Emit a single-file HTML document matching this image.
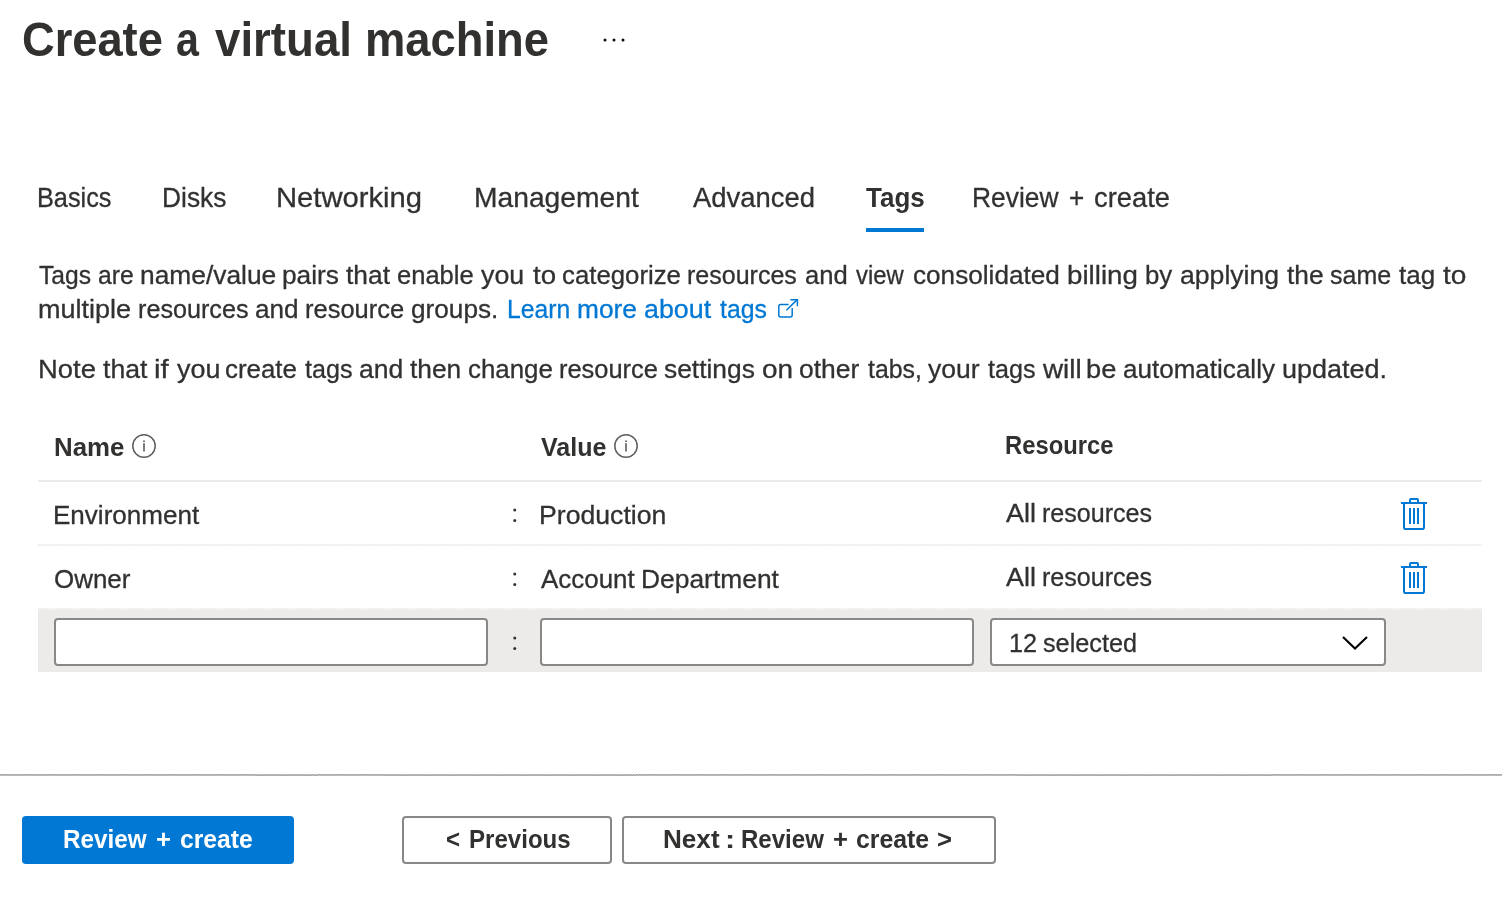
<!DOCTYPE html>
<html lang="en">
<head>
<meta charset="utf-8">
<title>Create a virtual machine - Microsoft Azure</title>
<style>
  html, body { margin: 0; padding: 0; }
  body {
    width: 1502px; height: 902px; overflow: hidden; position: relative;
    background: #ffffff; color: #323130;
    font-family: "Liberation Sans", sans-serif;
  }
  .t { position: absolute; white-space: pre; line-height: 1; font-family: "Liberation Sans", sans-serif; transform-origin: 0 50%; }
  .t.r { -webkit-text-stroke: 0.3px currentColor; }
  .abs { position: absolute; }
  /* active tab underline */
  .tab-underline { left: 866px; top: 228px; width: 58px; height: 4px; background: #0078d4; }
  /* table lines */
  .hdr-line { left: 38px; top: 480px; width: 1444px; height: 2px; background: #edebe9; }
  .row-line { left: 38px; width: 1444px; height: 2px;
    background: repeating-linear-gradient(90deg, #efeeed 0, #efeeed 2px, #f9f8f8 2px, #f9f8f8 3px); }
  .new-row { left: 38px; top: 608px; width: 1444px; height: 64px; background: #edebe9; }
  .new-row-dots { left: 38px; top: 608px; width: 1444px; height: 2px;
    background: repeating-linear-gradient(90deg, #edebe9 0, #edebe9 1.5px, #f6f5f4 1.5px, #f6f5f4 3px); }
  .field { box-sizing: border-box; top: 618px; height: 48px; background: #ffffff;
    border: 2px solid #8a8886; border-radius: 4px; }
  /* footer */
  .footer-line { left: 0; top: 774px; width: 1502px; height: 2px;
    background:
      repeating-linear-gradient(90deg, #a4a4a4 0, #a4a4a4 1.5px, #c4c4c4 1.5px, #c4c4c4 3px) 0 0 / 100% 1px no-repeat,
      repeating-linear-gradient(90deg, #c4c4c4 0, #c4c4c4 1.5px, #a4a4a4 1.5px, #a4a4a4 3px) 0 1px / 100% 1px no-repeat; }
  .btn { box-sizing: border-box; top: 816px; height: 48px; border-radius: 4px; }
  .btn-primary { left: 22px; width: 272px; background: #0078d4; }
  .btn-default { background: #ffffff; border: 2px solid #8a8886; }
  svg { position: absolute; overflow: visible; }
</style>
</head>
<body>

<!-- header "..." more button -->
<svg class="abs" style="left:0;top:0" width="1502" height="902" viewBox="0 0 1502 902">
  <g fill="#0a0a0a">
    <circle cx="605" cy="40" r="1.5"/><circle cx="614" cy="40" r="1.5"/><circle cx="623" cy="40" r="1.5"/>
  </g>
</svg>

<div class="abs tab-underline"></div>

<!-- table -->
<div class="abs hdr-line"></div>
<div class="abs row-line" style="top:544px"></div>
<div class="abs new-row"></div>
<div class="abs new-row-dots"></div>
<div class="abs field" style="left:54px;width:434px"></div>
<div class="abs field" style="left:540px;width:434px"></div>
<div class="abs field" style="left:990px;width:396px"></div>

<!-- footer -->
<div class="abs footer-line"></div>
<div class="abs btn btn-primary"></div>
<div class="abs btn btn-default" style="left:402px;width:210px"></div>
<div class="abs btn btn-default" style="left:622px;width:374px"></div>

<!-- icons -->
<svg class="abs" style="left:0;top:0" width="1502" height="902" viewBox="0 0 1502 902" fill="none">
  <!-- external link -->
  <g stroke="#0078d4" stroke-width="1.5" stroke-linecap="butt" stroke-linejoin="miter">
    <path d="M788.6 304.5 H780.8 Q778.8 304.5 778.8 306.5 V315 Q778.8 317 780.8 317 H790.2 Q792.2 317 792.2 315 V308"/>
    <path d="M786.4 310.3 L797.2 299.6"/>
    <path d="M790.4 299.7 H797.4 V306.2"/>
  </g>
  <!-- info icons -->
  <g stroke="#605e5c" stroke-width="1.5">
    <circle cx="144" cy="446" r="11.2"/>
    <circle cx="626" cy="446" r="11.2"/>
  </g>
  <g fill="#6f6d6b">
    <rect x="143.1" y="440.4" width="1.8" height="1.6"/><rect x="143.1" y="443.2" width="1.8" height="8.3"/>
    <rect x="625.1" y="440.4" width="1.8" height="1.6"/><rect x="625.1" y="443.2" width="1.8" height="8.3"/>
  </g>
  <!-- colons -->
  <g fill="#323130">
    <circle cx="514.75" cy="510" r="1.5"/><circle cx="514.75" cy="520.6" r="1.5"/>
    <circle cx="514.75" cy="574" r="1.5"/><circle cx="514.75" cy="584.6" r="1.5"/>
    <circle cx="514.75" cy="638" r="1.5"/><circle cx="514.75" cy="648.6" r="1.5"/>
  </g>
  <!-- trash icons -->
  <g id="trash1">
    <rect x="1401" y="502" width="26" height="2" fill="#0078d4"/>
    <path d="M1410 502 V500 Q1410 499 1411 499 H1417 Q1418 499 1418 500 V502" stroke="#0078d4" stroke-width="2"/>
    <path d="M1404 504 V527.2 Q1404 529 1405.8 529 H1422.2 Q1424 529 1424 527.2 V504" stroke="#0078d4" stroke-width="2"/>
    <rect x="1409" y="508" width="2" height="16" fill="#0078d4"/>
    <rect x="1413" y="508" width="2" height="16" fill="#0078d4"/>
    <rect x="1417" y="508" width="2" height="16" fill="#0078d4"/>
  </g>
  <g transform="translate(0 64)">
    <rect x="1401" y="502" width="26" height="2" fill="#0078d4"/>
    <path d="M1410 502 V500 Q1410 499 1411 499 H1417 Q1418 499 1418 500 V502" stroke="#0078d4" stroke-width="2"/>
    <path d="M1404 504 V527.2 Q1404 529 1405.8 529 H1422.2 Q1424 529 1424 527.2 V504" stroke="#0078d4" stroke-width="2"/>
    <rect x="1409" y="508" width="2" height="16" fill="#0078d4"/>
    <rect x="1413" y="508" width="2" height="16" fill="#0078d4"/>
    <rect x="1417" y="508" width="2" height="16" fill="#0078d4"/>
  </g>
  <!-- dropdown chevron -->
  <path d="M1343 637 L1355 648.6 L1367 637" stroke="#000000" stroke-width="2.1"/>
</svg>

<div id="text-layer" style="position:absolute;left:0;top:0;width:1502px;height:902px;will-change:transform">
<span class="t" style="left:22.00px;top:15.12px;font-size:49px;font-weight:700;color:#323130;transform:scaleX(0.9235)">Create</span>
<span class="t" style="left:175.50px;top:15.12px;font-size:49px;font-weight:700;color:#323130;transform:scaleX(0.8394)">a</span>
<span class="t" style="left:214.50px;top:15.12px;font-size:49px;font-weight:700;color:#323130;transform:scaleX(0.9315)">virtual</span>
<span class="t" style="left:365.00px;top:15.12px;font-size:49px;font-weight:700;color:#323130;transform:scaleX(0.9258)">machine</span>
<span class="t r" style="left:37.00px;top:183.07px;font-size:28.5px;font-weight:400;color:#323130;transform:scaleX(0.8877)">Basics</span>
<span class="t r" style="left:161.50px;top:183.07px;font-size:28.5px;font-weight:400;color:#323130;transform:scaleX(0.9244)">Disks</span>
<span class="t r" style="left:276.00px;top:183.07px;font-size:28.5px;font-weight:400;color:#323130;transform:scaleX(1.0245)">Networking</span>
<span class="t r" style="left:474.00px;top:183.07px;font-size:28.5px;font-weight:400;color:#323130;transform:scaleX(0.9903)">Management</span>
<span class="t r" style="left:693.00px;top:183.07px;font-size:28.5px;font-weight:400;color:#323130;transform:scaleX(0.9632)">Advanced</span>
<span class="t" style="left:866.00px;top:183.07px;font-size:28.5px;font-weight:700;color:#323130;transform:scaleX(0.9112)">Tags</span>
<span class="t r" style="left:971.50px;top:183.07px;font-size:28.5px;font-weight:400;color:#323130;transform:scaleX(0.9253)">Review</span>
<span class="t r" style="left:1069.00px;top:183.07px;font-size:28.5px;font-weight:400;color:#323130;transform:scaleX(0.9165)">+</span>
<span class="t r" style="left:1093.50px;top:183.07px;font-size:28.5px;font-weight:400;color:#323130;transform:scaleX(0.9592)">create</span>
<span class="t r" style="left:39.00px;top:261.99px;font-size:26px;font-weight:400;color:#323130;transform:scaleX(0.9483)">Tags</span>
<span class="t r" style="left:97.50px;top:261.99px;font-size:26px;font-weight:400;color:#323130;transform:scaleX(0.9495)">are</span>
<span class="t r" style="left:139.50px;top:261.99px;font-size:26px;font-weight:400;color:#323130;transform:scaleX(1.0137)">name/value</span>
<span class="t r" style="left:282.00px;top:261.99px;font-size:26px;font-weight:400;color:#323130;transform:scaleX(1.0113)">pairs</span>
<span class="t r" style="left:346.00px;top:261.99px;font-size:26px;font-weight:400;color:#323130;transform:scaleX(1.0140)">that</span>
<span class="t r" style="left:397.00px;top:261.99px;font-size:26px;font-weight:400;color:#323130;transform:scaleX(0.9816)">enable</span>
<span class="t r" style="left:480.50px;top:261.99px;font-size:26px;font-weight:400;color:#323130;transform:scaleX(1.0301)">you</span>
<span class="t r" style="left:532.50px;top:261.99px;font-size:26px;font-weight:400;color:#323130;transform:scaleX(1.0625)">to</span>
<span class="t r" style="left:562.00px;top:261.99px;font-size:26px;font-weight:400;color:#323130;transform:scaleX(0.9916)">categorize</span>
<span class="t r" style="left:687.00px;top:261.99px;font-size:26px;font-weight:400;color:#323130;transform:scaleX(0.9622)">resources</span>
<span class="t r" style="left:805.00px;top:261.99px;font-size:26px;font-weight:400;color:#323130;transform:scaleX(0.9856)">and</span>
<span class="t r" style="left:855.50px;top:261.99px;font-size:26px;font-weight:400;color:#323130;transform:scaleX(0.9154)">view</span>
<span class="t r" style="left:913.00px;top:261.99px;font-size:26px;font-weight:400;color:#323130;transform:scaleX(1.0056)">consolidated</span>
<span class="t r" style="left:1067.00px;top:261.99px;font-size:26px;font-weight:400;color:#323130;transform:scaleX(1.0667)">billing</span>
<span class="t r" style="left:1144.50px;top:261.99px;font-size:26px;font-weight:400;color:#323130;transform:scaleX(0.9927)">by</span>
<span class="t r" style="left:1180.00px;top:261.99px;font-size:26px;font-weight:400;color:#323130;transform:scaleX(1.0234)">applying</span>
<span class="t r" style="left:1287.00px;top:261.99px;font-size:26px;font-weight:400;color:#323130;transform:scaleX(1.0117)">the</span>
<span class="t r" style="left:1329.50px;top:261.99px;font-size:26px;font-weight:400;color:#323130;transform:scaleX(0.9609)">same</span>
<span class="t r" style="left:1398.50px;top:261.99px;font-size:26px;font-weight:400;color:#323130;transform:scaleX(1.0008)">tag</span>
<span class="t r" style="left:1442.50px;top:261.99px;font-size:26px;font-weight:400;color:#323130;transform:scaleX(1.0770)">to</span>
<span class="t r" style="left:37.50px;top:295.99px;font-size:26px;font-weight:400;color:#323130;transform:scaleX(1.0391)">multiple</span>
<span class="t r" style="left:138.00px;top:295.99px;font-size:26px;font-weight:400;color:#323130;transform:scaleX(0.9679)">resources</span>
<span class="t r" style="left:254.50px;top:295.99px;font-size:26px;font-weight:400;color:#323130;transform:scaleX(1.0057)">and</span>
<span class="t r" style="left:304.50px;top:295.99px;font-size:26px;font-weight:400;color:#323130;transform:scaleX(0.9796)">resource</span>
<span class="t r" style="left:410.50px;top:295.99px;font-size:26px;font-weight:400;color:#323130;transform:scaleX(1.0072)">groups.</span>
<span class="t r" style="left:506.50px;top:295.99px;font-size:26px;font-weight:400;color:#0078d4;transform:scaleX(0.9493)">Learn</span>
<span class="t r" style="left:576.50px;top:295.99px;font-size:26px;font-weight:400;color:#0078d4;transform:scaleX(1.0107)">more</span>
<span class="t r" style="left:644.00px;top:295.99px;font-size:26px;font-weight:400;color:#0078d4;transform:scaleX(1.0312)">about</span>
<span class="t r" style="left:720.00px;top:295.99px;font-size:26px;font-weight:400;color:#0078d4;transform:scaleX(0.9544)">tags</span>
<span class="t r" style="left:37.50px;top:355.99px;font-size:26px;font-weight:400;color:#323130;transform:scaleX(1.0540)">Note</span>
<span class="t r" style="left:103.00px;top:355.99px;font-size:26px;font-weight:400;color:#323130;transform:scaleX(1.0243)">that</span>
<span class="t r" style="left:154.00px;top:355.99px;font-size:26px;font-weight:400;color:#323130;transform:scaleX(1.1356)">if</span>
<span class="t r" style="left:176.50px;top:355.99px;font-size:26px;font-weight:400;color:#323130;transform:scaleX(1.0352)">you</span>
<span class="t r" style="left:225.00px;top:355.99px;font-size:26px;font-weight:400;color:#323130;transform:scaleX(0.9943)">create</span>
<span class="t r" style="left:305.00px;top:355.99px;font-size:26px;font-weight:400;color:#323130;transform:scaleX(0.9668)">tags</span>
<span class="t r" style="left:358.50px;top:355.99px;font-size:26px;font-weight:400;color:#323130;transform:scaleX(1.0209)">and</span>
<span class="t r" style="left:409.50px;top:355.99px;font-size:26px;font-weight:400;color:#323130;transform:scaleX(1.0123)">then</span>
<span class="t r" style="left:467.50px;top:355.99px;font-size:26px;font-weight:400;color:#323130;transform:scaleX(0.9952)">change</span>
<span class="t r" style="left:558.50px;top:355.99px;font-size:26px;font-weight:400;color:#323130;transform:scaleX(0.9779)">resource</span>
<span class="t r" style="left:664.00px;top:355.99px;font-size:26px;font-weight:400;color:#323130;transform:scaleX(1.0137)">settings</span>
<span class="t r" style="left:761.50px;top:355.99px;font-size:26px;font-weight:400;color:#323130;transform:scaleX(1.0754)">on</span>
<span class="t r" style="left:798.50px;top:355.99px;font-size:26px;font-weight:400;color:#323130;transform:scaleX(1.0174)">other</span>
<span class="t r" style="left:867.50px;top:355.99px;font-size:26px;font-weight:400;color:#323130;transform:scaleX(0.9557)">tabs,</span>
<span class="t r" style="left:928.00px;top:355.99px;font-size:26px;font-weight:400;color:#323130;transform:scaleX(1.0200)">your</span>
<span class="t r" style="left:988.00px;top:355.99px;font-size:26px;font-weight:400;color:#323130;transform:scaleX(0.9668)">tags</span>
<span class="t r" style="left:1043.00px;top:355.99px;font-size:26px;font-weight:400;color:#323130;transform:scaleX(1.0709)">will</span>
<span class="t r" style="left:1085.50px;top:355.99px;font-size:26px;font-weight:400;color:#323130;transform:scaleX(1.0466)">be</span>
<span class="t r" style="left:1122.50px;top:355.99px;font-size:26px;font-weight:400;color:#323130;transform:scaleX(1.0014)">automatically</span>
<span class="t r" style="left:1281.50px;top:355.99px;font-size:26px;font-weight:400;color:#323130;transform:scaleX(1.0371)">updated.</span>
<span class="t" style="left:54.00px;top:433.99px;font-size:26px;font-weight:700;color:#323130;transform:scaleX(0.9943)">Name</span>
<span class="t" style="left:540.50px;top:433.99px;font-size:26px;font-weight:700;color:#323130;transform:scaleX(0.9642)">Value</span>
<span class="t" style="left:1005.00px;top:431.99px;font-size:26px;font-weight:700;color:#323130;transform:scaleX(0.9156)">Resource</span>
<span class="t r" style="left:52.50px;top:501.99px;font-size:26px;font-weight:400;color:#323130;transform:scaleX(1.0014)">Environment</span>
<span class="t r" style="left:539.00px;top:501.99px;font-size:26px;font-weight:400;color:#323130;transform:scaleX(1.0248)">Production</span>
<span class="t r" style="left:1005.50px;top:499.69px;font-size:26px;font-weight:400;color:#323130;transform:scaleX(1.0370)">All</span>
<span class="t r" style="left:1042.00px;top:499.69px;font-size:26px;font-weight:400;color:#323130;transform:scaleX(0.9640)">resources</span>
<span class="t r" style="left:53.50px;top:565.99px;font-size:26px;font-weight:400;color:#323130;transform:scaleX(0.9974)">Owner</span>
<span class="t r" style="left:540.50px;top:565.79px;font-size:26px;font-weight:400;color:#323130;transform:scaleX(0.9979)">Account</span>
<span class="t r" style="left:641.00px;top:565.79px;font-size:26px;font-weight:400;color:#323130;transform:scaleX(1.0151)">Department</span>
<span class="t r" style="left:1005.50px;top:563.69px;font-size:26px;font-weight:400;color:#323130;transform:scaleX(1.0370)">All</span>
<span class="t r" style="left:1042.00px;top:563.69px;font-size:26px;font-weight:400;color:#323130;transform:scaleX(0.9640)">resources</span>
<span class="t r" style="left:1008.50px;top:629.59px;font-size:26px;font-weight:400;color:#323130;transform:scaleX(0.9699)">12</span>
<span class="t r" style="left:1043.00px;top:629.59px;font-size:26px;font-weight:400;color:#323130;transform:scaleX(0.9702)">selected</span>
<span class="t" style="left:63.00px;top:825.59px;font-size:26px;font-weight:700;color:#ffffff;transform:scaleX(0.9342)">Review</span>
<span class="t" style="left:155.50px;top:825.59px;font-size:26px;font-weight:700;color:#ffffff;transform:scaleX(0.9870)">+</span>
<span class="t" style="left:180.00px;top:825.59px;font-size:26px;font-weight:700;color:#ffffff;transform:scaleX(0.9494)">create</span>
<span class="t" style="left:446.00px;top:825.59px;font-size:26px;font-weight:700;color:#323130;transform:scaleX(0.9260)">&lt;</span>
<span class="t" style="left:468.50px;top:825.59px;font-size:26px;font-weight:700;color:#323130;transform:scaleX(0.9262)">Previous</span>
<span class="t" style="left:662.50px;top:825.59px;font-size:26px;font-weight:700;color:#323130;transform:scaleX(1.0038)">Next</span>
<span class="t" style="left:725.00px;top:825.59px;font-size:26px;font-weight:700;color:#323130;transform:scaleX(1.1713)">:</span>
<span class="t" style="left:740.50px;top:825.59px;font-size:26px;font-weight:700;color:#323130;transform:scaleX(0.9251)">Review</span>
<span class="t" style="left:832.50px;top:825.59px;font-size:26px;font-weight:700;color:#323130;transform:scaleX(0.9867)">+</span>
<span class="t" style="left:856.00px;top:825.59px;font-size:26px;font-weight:700;color:#323130;transform:scaleX(0.9548)">create</span>
<span class="t" style="left:937.00px;top:825.59px;font-size:26px;font-weight:700;color:#323130;transform:scaleX(0.9870)">&gt;</span>
</div>

</body>
</html>
